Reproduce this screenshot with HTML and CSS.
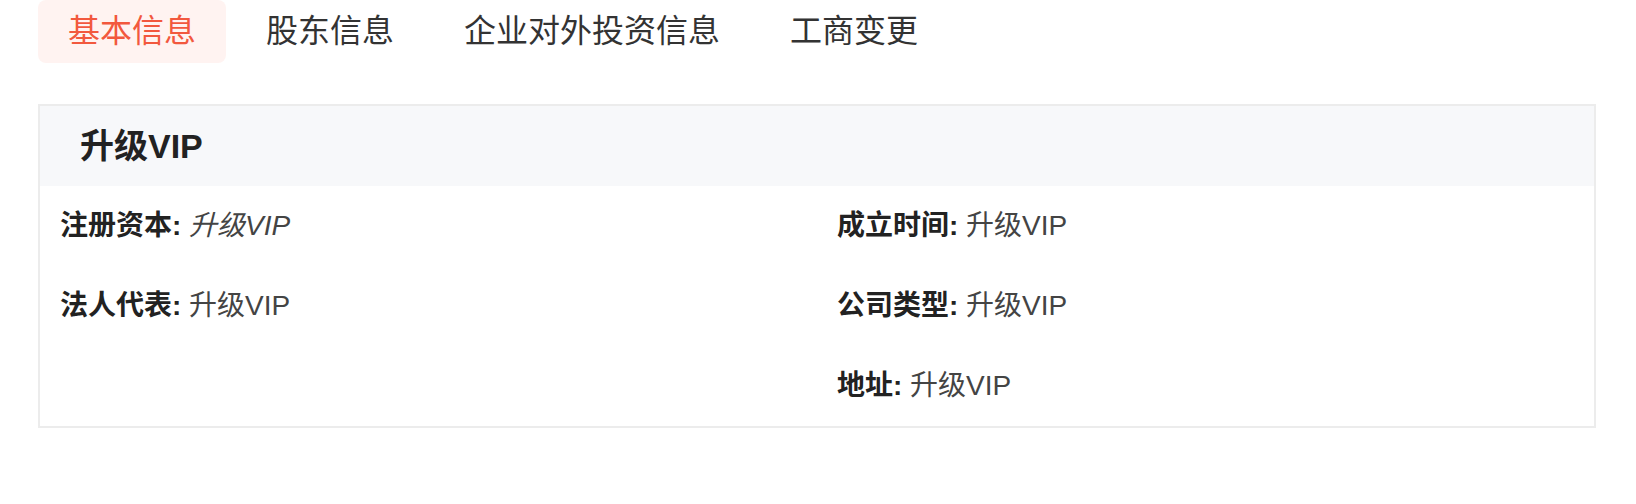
FILE: index.html
```html
<!DOCTYPE html>
<html lang="zh-CN">
<head>
    <meta charset="UTF-8">
    <meta name="viewport" content="width=device-width, initial-scale=1.0">
    <title>企业信息</title>
    <link rel="stylesheet" href="styles.css">
</head>
<body>
    <div class="page">
        <div class="tabs">
            <div class="tab active">基本信息</div>
            <div class="tab">股东信息</div>
            <div class="tab">企业对外投资信息</div>
            <div class="tab">工商变更</div>
        </div>

        <div class="card">
            <div class="card-header">升级VIP</div>
            <div class="info-grid">
                <div class="info-item"><span class="label">注册资本:</span> <em class="value">升级VIP</em></div>
                <div class="info-item"><span class="label">成立时间:</span> <span class="value">升级VIP</span></div>
                <div class="info-item"><span class="label">法人代表:</span> <span class="value">升级VIP</span></div>
                <div class="info-item"><span class="label">公司类型:</span> <span class="value">升级VIP</span></div>
                <div class="info-item"></div>
                <div class="info-item"><span class="label">地址:</span> <span class="value">升级VIP</span></div>
            </div>
        </div>
    </div>
</body>
</html>
```

FILE: styles.css
```css
body {
    margin: 0;
    font-family: "Liberation Sans", "Noto Sans CJK SC", sans-serif;
    color: #333;
    background: #fff;
}

.page {
    padding: 0 40px 0 38px;
}

.tabs {
    display: flex;
    gap: 10px;
}

.tab {
    height: 63px;
    line-height: 63px;
    padding: 0 30px;
    font-size: 32px;
    color: #333;
    border-radius: 8px;
    cursor: pointer;
}

.tab.active {
    background: #fff3f1;
    color: #f2583e;
}

.card {
    margin-top: 41px;
    border: 2px solid #ececec;
}

.card-header {
    height: 80px;
    line-height: 80px;
    padding: 0 40px;
    background: #f7f8fa;
    font-size: 34px;
    font-weight: bold;
    color: #222;
}

.info-grid {
    display: grid;
    grid-template-columns: 1fr 1fr;
}

.info-item {
    height: 80px;
    line-height: 80px;
    padding: 0 20px;
    font-size: 28px;
}

.label {
    font-weight: bold;
    color: #222;
}

.value {
    color: #444;
}
```
